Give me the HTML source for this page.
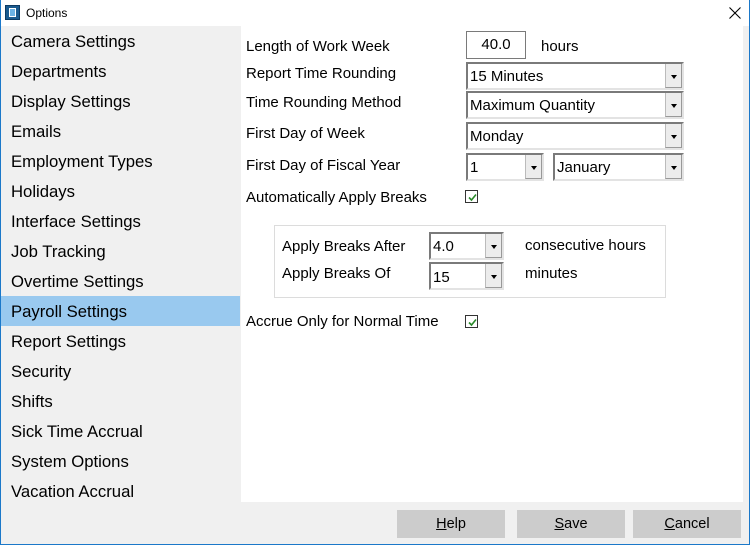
<!DOCTYPE html><html><head><style>
*{margin:0;padding:0;box-sizing:border-box}
body{width:750px;height:545px;position:relative;background:#f0f0f0;font-family:"Liberation Sans",sans-serif;color:#000;overflow:hidden}
.a{position:absolute}
#win{left:0;top:0;width:750px;height:545px;border:1px solid #1b78c9;border-top:none}
#title{left:0;top:0;width:750px;height:26px;background:#fff;font-size:12px}
.side{left:1px;width:239px;height:30px;font-size:16.7px;line-height:31px;padding-left:10px}
.lbl{font-size:15px;line-height:18px;white-space:nowrap}
.sel{height:28px;background:#fff;border:2px solid;border-color:#7a7a7a #e3e3e3 #e3e3e3 #7a7a7a;font-size:15px;line-height:25px;padding-left:2px}
.sel .b{position:absolute;right:0;top:0;width:17px;height:24px;background:#ececec;border-left:1px solid #bbb;border-right:1px solid #999;border-bottom:1px solid #999}
.sel .b:after{content:"";position:absolute;left:5px;top:11px;border-left:3.5px solid transparent;border-right:3.5px solid transparent;border-top:4px solid #000}
.cb{width:13px;height:13px;border:1px solid #333;background:#fff}
.cb svg{position:absolute;left:1px;top:1px}
.btn{top:510px;width:108px;height:28px;background:#cccccc;font-size:14.5px;text-align:center;line-height:29px}
</style></head><body>
<div class="a" style="left:1px;top:26px;width:240px;height:476px;background:#f0f0f0"></div>
<div class="a" style="left:241px;top:26px;width:502px;height:476px;background:#fff"></div>
<div class="a" id="title">
 <div class="a" style="left:5px;top:5px;width:15px;height:15px;background:#1a5a8e;border:1px solid #0c3a63"><div class="a" style="left:3px;top:2px;width:7px;height:9px;background:#6cb2e4;border:1px solid #fff"></div></div>
 <div class="a" style="left:26px;top:6px">Options</div>
 <svg class="a" style="left:729px;top:7px" width="12" height="12"><path d="M0.5 0.5 L11.5 11.5 M11.5 0.5 L0.5 11.5" stroke="#000" stroke-width="1.1"/></svg>
</div>
<div class="a side" style="top:26px">Camera Settings</div>
<div class="a side" style="top:56px">Departments</div>
<div class="a side" style="top:86px">Display Settings</div>
<div class="a side" style="top:116px">Emails</div>
<div class="a side" style="top:146px">Employment Types</div>
<div class="a side" style="top:176px">Holidays</div>
<div class="a side" style="top:206px">Interface Settings</div>
<div class="a side" style="top:236px">Job Tracking</div>
<div class="a side" style="top:266px">Overtime Settings</div>
<div class="a side" style="top:296px;background:#99c9ef">Payroll Settings</div>
<div class="a side" style="top:326px">Report Settings</div>
<div class="a side" style="top:356px">Security</div>
<div class="a side" style="top:386px">Shifts</div>
<div class="a side" style="top:416px">Sick Time Accrual</div>
<div class="a side" style="top:446px">System Options</div>
<div class="a side" style="top:476px">Vacation Accrual</div>

<div class="a lbl" style="left:246px;top:38px">Length of Work Week</div>
<div class="a lbl" style="left:246px;top:65px">Report Time Rounding</div>
<div class="a lbl" style="left:246px;top:94px">Time Rounding Method</div>
<div class="a lbl" style="left:246px;top:125px">First Day of Week</div>
<div class="a lbl" style="left:246px;top:157px">First Day of Fiscal Year</div>
<div class="a lbl" style="left:246px;top:189px">Automatically Apply Breaks</div>
<div class="a lbl" style="left:246px;top:313px">Accrue Only for Normal Time</div>

<div class="a" style="left:466px;top:31px;width:60px;height:28px;border:1px solid #7a7a7a;background:#fff;font-size:15px;text-align:center;line-height:25px">40.0</div>
<div class="a lbl" style="left:541px;top:38px">hours</div>
<div class="a sel" style="left:466px;top:62px;width:218px">15 Minutes<div class="b"></div></div>
<div class="a sel" style="left:466px;top:91px;width:218px">Maximum Quantity<div class="b"></div></div>
<div class="a sel" style="left:466px;top:122px;width:218px">Monday<div class="b"></div></div>
<div class="a sel" style="left:466px;top:153px;width:78px">1<div class="b"></div></div>
<div class="a sel" style="left:553px;top:153px;width:131px">January<div class="b"></div></div>
<div class="a cb" style="left:465px;top:190px"><svg width="11" height="11"><path d="M2 5.5 L4.5 8 L9 2.5" stroke="#2a8a2a" stroke-width="1.6" fill="none"/></svg></div>

<div class="a" style="left:274px;top:225px;width:392px;height:73px;border:1px solid #dcdcdc"></div>
<div class="a lbl" style="left:282px;top:238px">Apply Breaks After</div>
<div class="a lbl" style="left:282px;top:265px">Apply Breaks Of</div>
<div class="a sel" style="left:429px;top:232px;width:75px">4.0<div class="b"></div></div>
<div class="a sel" style="left:429px;top:262px;width:75px;line-height:28px">15<div class="b"></div></div>
<div class="a lbl" style="left:525px;top:237px">consecutive hours</div>
<div class="a lbl" style="left:525px;top:265px">minutes</div>
<div class="a cb" style="left:465px;top:315px"><svg width="11" height="11"><path d="M2 5.5 L4.5 8 L9 2.5" stroke="#2a8a2a" stroke-width="1.6" fill="none"/></svg></div>

<div class="a btn" style="left:397px"><u>H</u>elp</div>
<div class="a btn" style="left:517px"><u>S</u>ave</div>
<div class="a btn" style="left:633px"><u>C</u>ancel</div>
<div class="a" id="win"></div>
</body></html>
